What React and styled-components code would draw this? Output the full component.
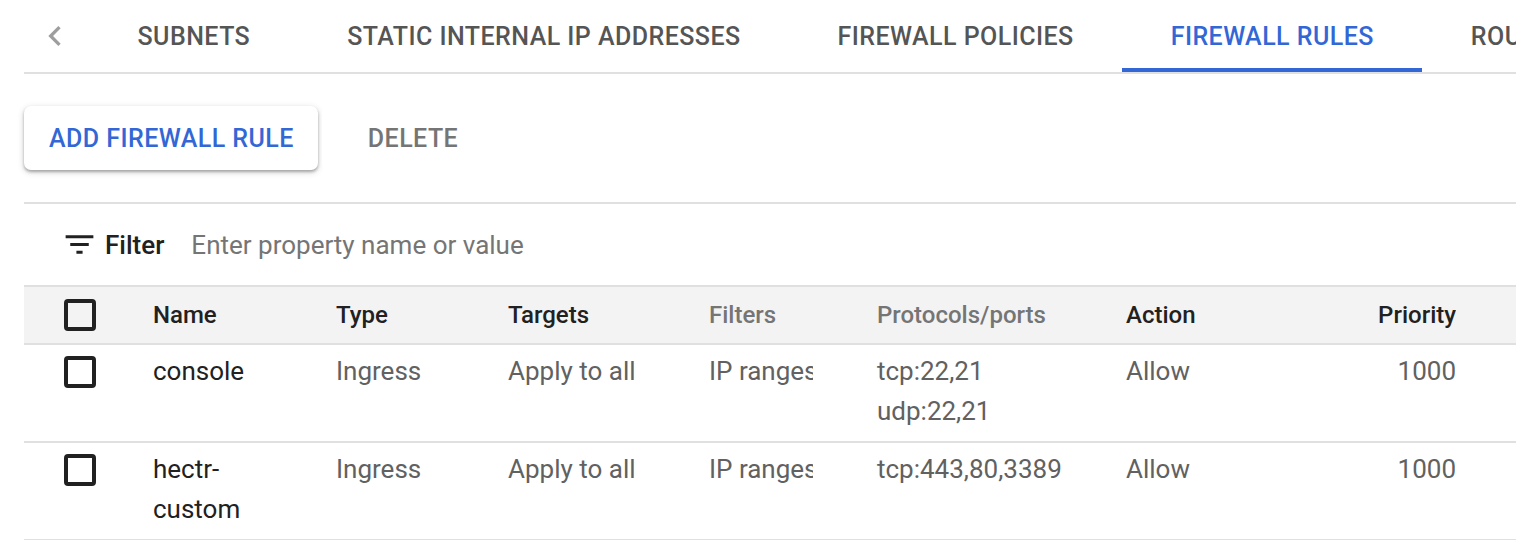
import React from "react";
import styled, { createGlobalStyle } from "styled-components";

const Global = createGlobalStyle`
  html, body { margin: 0; padding: 0; background: #fff; }
  body { font-family: Roboto, "Liberation Sans", Arial, sans-serif; overflow: hidden; }
`;

const Page = styled.div`
  width: 1516px;
  height: 540px;
  padding-left: 24px;
  box-sizing: border-box;
  overflow: hidden;
  color: #212121;
`;

const TabBar = styled.div`
  display: flex;
  align-items: stretch;
  height: 72px;
  border-bottom: 2px solid #e0e0e0;
  white-space: nowrap;
  overflow: hidden;
`;

const ChevronBox = styled.div`
  width: 65px;
  flex: none;
  display: flex;
  align-items: center;
  padding-left: 11px;
  box-sizing: border-box;
  color: #9e9e9e;
`;

const Tab = styled.div`
  flex: none;
  position: relative;
  display: flex;
  align-items: center;
  padding: 0 48.5px;
  font-size: 25px;
  font-weight: 500;
  letter-spacing: 0.45px;
  text-transform: uppercase;
  color: ${(p) => (p.$active ? "#3367d6" : "#555")};
  &::after {
    content: "";
    display: ${(p) => (p.$active ? "block" : "none")};
    position: absolute;
    left: 0;
    right: 0;
    bottom: 0;
    height: 4px;
    background: #3367d6;
  }
`;

const ActionBar = styled.div`
  display: flex;
  align-items: center;
  gap: 4px;
  padding: 32px 0;
  border-bottom: 2px solid #e0e0e0;
`;

const Button = styled.div`
  height: 64px;
  display: flex;
  align-items: center;
  padding: ${(p) => (p.$raised ? "0 24px 0 25px" : "0 46px")};
  font-size: 25px;
  font-weight: 500;
  letter-spacing: 0.45px;
  border-radius: 7px;
  background: #fff;
  color: ${(p) => (p.$raised ? "#3367d6" : "#757575")};
  box-shadow: ${(p) =>
    p.$raised
      ? "0 2px 3px rgba(0,0,0,0.28), 0 2px 6px 1px rgba(0,0,0,0.12)"
      : "none"};
`;

const FilterRow = styled.div`
  height: 81px;
  display: flex;
  align-items: center;
  padding-left: 37px;
`;

const FilterLabel = styled.span`
  font-size: 26px;
  font-weight: 500;
  color: #212121;
  margin-left: 7px;
`;

const FilterInput = styled.span`
  font-size: 26px;
  color: #757575;
  margin-left: 27px;
`;

const Grid = styled.div`
  display: grid;
  grid-template-columns: 129px 183px 172px 201px 168px 249px 170px 160px 1fr;
`;

const HeadCell = styled.div`
  background: #f3f3f3;
  border-top: 2px solid #e0e0e0;
  border-bottom: 2px solid #e0e0e0;
  height: 56px;
  display: flex;
  align-items: center;
  justify-content: ${(p) => (p.$right ? "flex-end" : "flex-start")};
  padding-left: ${(p) => (p.$check ? "40px" : "0")};
  font-size: 24px;
  font-weight: 500;
  color: ${(p) => (p.$muted ? "#757575" : "#212121")};
  white-space: nowrap;
`;

const Cell = styled.div`
  border-bottom: 2px solid #e0e0e0;
  padding: ${(p) => (p.$check ? "11px 0 0 40px" : "6px 0 10px 0")};
  font-size: 26px;
  line-height: 40px;
  color: ${(p) => (p.$dark ? "#212121" : "#616161")};
  text-align: ${(p) => (p.$right ? "right" : "left")};
`;

const Clip = styled.div`
  width: 104px;
  overflow: hidden;
  white-space: nowrap;
`;

const Box = styled.div`
  width: 32px;
  height: 32px;
  box-sizing: border-box;
  border: 4px solid #212121;
  border-radius: 4px;
`;

const Chevron = () => (
  <svg width="40" height="40" viewBox="0 0 24 24" fill="currentColor">
    <path d="M15.41 7.41L14 6l-6 6 6 6 1.41-1.41L10.83 12z" />
  </svg>
);

const FilterIcon = () => (
  <svg width="37" height="37" viewBox="0 0 24 24" fill="#212121">
    <path d="M10 18h4v-2h-4v2zM3 6v2h18V6H3zm3 7h12v-2H6v2z" />
  </svg>
);

const tabs = [
  "Subnets",
  "Static internal IP addresses",
  "Firewall policies",
  "Firewall rules",
  "Routes",
];

const rows = [
  {
    name: ["console"],
    type: "Ingress",
    targets: "Apply to all",
    filters: "IP ranges",
    ports: ["tcp:22,21", "udp:22,21"],
    action: "Allow",
    priority: "1000",
  },
  {
    name: ["hectr-", "custom"],
    type: "Ingress",
    targets: "Apply to all",
    filters: "IP ranges",
    ports: ["tcp:443,80,3389"],
    action: "Allow",
    priority: "1000",
  },
];

export default function App() {
  return (
    <>
      <Global />
      <Page>
        <TabBar>
          <ChevronBox>
            <Chevron />
          </ChevronBox>
          {tabs.map((t) => (
            <Tab key={t} $active={t === "Firewall rules"}>
              {t}
            </Tab>
          ))}
        </TabBar>
        <ActionBar>
          <Button $raised>ADD FIREWALL RULE</Button>
          <Button>DELETE</Button>
        </ActionBar>
        <FilterRow>
          <FilterIcon />
          <FilterLabel>Filter</FilterLabel>
          <FilterInput>Enter property name or value</FilterInput>
        </FilterRow>
        <Grid>
          <HeadCell $check>
            <Box />
          </HeadCell>
          <HeadCell>Name</HeadCell>
          <HeadCell>Type</HeadCell>
          <HeadCell>Targets</HeadCell>
          <HeadCell $muted>Filters</HeadCell>
          <HeadCell $muted>Protocols/ports</HeadCell>
          <HeadCell>Action</HeadCell>
          <HeadCell $right>Priority</HeadCell>
          <HeadCell />
          {rows.map((r, i) => (
            <React.Fragment key={i}>
              <Cell $check>
                <Box />
              </Cell>
              <Cell $dark>
                {r.name.map((n) => (
                  <div key={n}>{n}</div>
                ))}
              </Cell>
              <Cell>{r.type}</Cell>
              <Cell>{r.targets}</Cell>
              <Cell>
                <Clip>{r.filters}</Clip>
              </Cell>
              <Cell>
                {r.ports.map((p) => (
                  <div key={p}>{p}</div>
                ))}
              </Cell>
              <Cell>{r.action}</Cell>
              <Cell $right>{r.priority}</Cell>
              <Cell />
            </React.Fragment>
          ))}
        </Grid>
      </Page>
    </>
  );
}
